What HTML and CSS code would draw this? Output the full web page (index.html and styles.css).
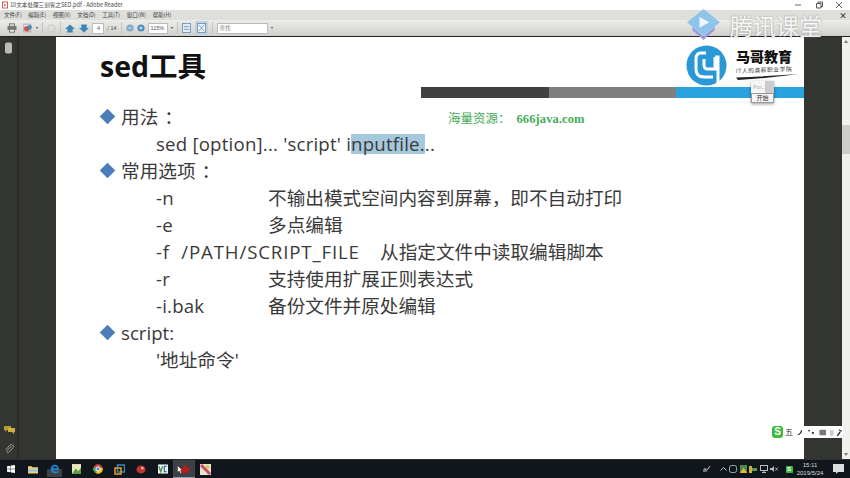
FILE: index.html

```html
<!DOCTYPE html>
<html lang="en">
<head>
  <meta charset="UTF-8">
  <title>10文本处理三剑客之SED.pdf - Adobe Reader</title>
  <link rel="stylesheet" href="styles.css">
</head>
<body>
  <div class="titlebar">
    <svg class="app-icon" width="6" height="8" viewBox="0 0 8 9"><rect x="0.5" y="0.5" width="7" height="8" fill="#fff" stroke="#b33"/><path d="M2 6.500C3 4 4 3 4 2C4 4 5 5 6.500 5.500C5 5 3 5.500 2 6.500Z" fill="#c22"/></svg>
    <span class="title-text">10文本处理三剑客之SED.pdf - Adobe Reader</span>
    <div class="win-btns">
      <svg width="8" height="8" viewBox="0 0 8 8"><path d="M1 4H7" stroke="#666"/></svg>
      <svg width="8" height="8" viewBox="0 0 8 8"><path d="M1.500 2.500H6V7H1.500ZM3 2.500V1H7.500V5.500H6" fill="none" stroke="#555"/></svg>
      <svg width="8" height="8" viewBox="0 0 8 8"><path d="M1 1L7 7M7 1L1 7" stroke="#666"/></svg>
    </div>
  </div>

  <div class="menubar">
    <span>文件(F)</span><span>编辑(E)</span><span>视图(V)</span><span>文档(D)</span><span>工具(T)</span><span>窗口(W)</span><span>帮助(H)</span>
    <span class="menu-close">×</span>
  </div>

  <div class="toolbar">
    <svg width="10" height="10" viewBox="0 0 12 11"><rect x="3" y="0.5" width="6" height="3" fill="#ddd" stroke="#666"/><rect x="0.5" y="3" width="11" height="5" rx="1" fill="#777"/><rect x="3" y="7" width="6" height="3.500" fill="#eee" stroke="#666"/></svg>
    <svg class="tb-m2" width="10" height="10" viewBox="0 0 13 12"><rect x="1" y="1" width="9" height="10" fill="#eee" stroke="#99a"/><circle cx="5" cy="7" r="3.600" fill="#d2533f"/><circle cx="8.500" cy="5" r="3" fill="#4d86bb"/></svg>
    <span class="caret"></span>
    <span class="tb-sep"></span>
    <svg width="9" height="9" viewBox="0 0 11 11"><circle cx="5.500" cy="5.500" r="4.500" fill="none" stroke="#ccc" stroke-width="1.400"/></svg>
    <span class="tb-sep"></span>
    <svg width="10" height="9" viewBox="0 0 11 10"><path d="M5.500 0.500L11 5.500H8.500V9.500H2.500V5.500H0Z" fill="#3c85b8"/></svg>
    <svg width="10" height="9" viewBox="0 0 11 10"><path d="M5.500 9.500L11 4.500H8.500V0.500H2.500V4.500H0Z" fill="#3c85b8"/></svg>
    <span class="tb-input page-num tb-m1">4</span>
    <span class="page-total tb-m1">/ 14</span>
    <span class="tb-sep"></span>
    <svg width="8" height="8" viewBox="0 0 10 10"><circle cx="5" cy="5" r="4.500" fill="#7fa9cb"/><path d="M3 5H7" stroke="#fff"/></svg>
    <svg class="tb-m1" width="8" height="8" viewBox="0 0 10 10"><circle cx="5" cy="5" r="4.500" fill="#4d8cc0"/><path d="M3 5H7M5 3V7" stroke="#fff"/></svg>
    <span class="tb-input zoom-val tb-m1">115%</span>
    <span class="caret"></span>
    <span class="tb-sep"></span>
    <svg width="9" height="10" viewBox="0 0 10 11"><rect x="0.500" y="0.500" width="9" height="10" fill="#e8eef4" stroke="#6f97bd"/><path d="M2 4H8M2 7H8" stroke="#6f97bd"/></svg>
    <span class="fit-active"><svg width="9" height="10" viewBox="0 0 11 12"><rect x="0.500" y="0.500" width="10" height="11" fill="#f2f6fa" stroke="#5f8fbb"/><path d="M2 2L9 10M9 2L2 10" stroke="#5f8fbb"/></svg></span>
    <span class="tb-sep"></span>
    <span class="tb-input search-box">查找</span>
    <span class="caret"></span>
  </div>

  <div class="viewer">
    <div class="side-panel">
      <svg width="9" height="12" viewBox="0 0 8 12"><rect x="0.500" y="0.500" width="7" height="11" rx="2" fill="#bbb"/></svg>
      <div class="side-bottom">
        <svg width="11" height="9" viewBox="0 0 11 9"><path d="M0 1H7V5H3L1 7V5H0Z" fill="#b89a35"/><path d="M4 3H11V7H10V9L8 7H4Z" fill="#d0b040"/></svg>
        <svg width="10" height="11" viewBox="0 0 10 11"><path d="M7.500 3L3.200 7.800C2 9.200 3.800 10.500 5 9.200L9 4.700C10.200 2.600 7.800 .3 6 2L1.600 7" fill="none" stroke="#999"/></svg>
      </div>
    </div>

    <div class="slide">
      <h1 class="slide-title">sed工具</h1>
      <div class="band"><span class="band-dark"></span><span class="band-grey"></span><span class="band-blue"></span></div>

      <div class="bullet bullet-first"><span class="diamond"></span>用法<span class="colon">：</span></div>
      <div class="indent latin">sed [option]... 'script' i<span class="selected">nputfile.</span>..</div>
      <div class="bullet"><span class="diamond"></span>常用选项<span class="colon">：</span></div>
      <div class="opt-row"><span class="opt latin">-n</span><span>不输出模式空间内容到屏幕，即不自动打印</span></div>
      <div class="opt-row"><span class="opt latin">-e</span><span>多点编辑</span></div>
      <div class="opt-row"><span class="opt opt-wide">-f &nbsp;/PATH/SCRIPT_FILE</span><span>从指定文件中读取编辑脚本</span></div>
      <div class="opt-row"><span class="opt latin">-r</span><span>支持使用扩展正则表达式</span></div>
      <div class="opt-row"><span class="opt latin">-i.bak</span><span>备份文件并原处编辑</span></div>
      <div class="bullet"><span class="diamond"></span>script:</div>
      <div class="indent">'地址命令'</div>

      <div class="promo">海量资源：<span class="promo-url">666java.com</span></div>

      <div class="brand">
        <svg width="41" height="41" viewBox="0 0 41 41"><circle cx="20.500" cy="20.500" r="20" fill="#2a97d6"/><path d="M20 8H15Q10 8 10 14V24Q10 32 18 32H27" fill="none" stroke="#fff" stroke-width="3"/><path d="M18 14V20Q18 24 22 24H29V12M29 12H32V38" fill="none" stroke="#fff" stroke-width="3"/></svg>
        <div class="brand-text">
          <div class="brand-name">马哥教育</div>
          <div class="brand-sub">IT人的高薪职业学院</div>
          <svg class="brand-line" width="62" height="6" viewBox="0 0 62 6"><path d="M0 3.500Q30 2.500 62 0Q35 4 2 6Z" fill="#222"/></svg>
        </div>
      </div>

      <div class="pop">
        <div class="pop-top">Poi...</div>
        <div class="pop-btn">开始</div>
      </div>

      <div class="ime">
        <span class="ime-s">S</span><span class="ime-wu">五</span>
        <svg width="47" height="9" viewBox="0 0 50 9"><path d="M3 7Q7 6 7 2Q7 6 3 7" fill="#333" stroke="#333"/><circle cx="15" cy="2.500" r="1" fill="#333"/><circle cx="19" cy="5" r="1.200" fill="#333"/><rect x="26" y="1.500" width="7" height="6" rx="1" fill="#777"/><rect x="37" y="2" width="4" height="6" fill="#ccc"/><path d="M45 8L48 4M47 1.500L49.500 3.500" stroke="#333" stroke-width="1.500"/></svg>
      </div>
    </div>

    <div class="right-panel"></div>
    <div class="scrollbar">
      <span class="arrow-up"></span>
      <span class="thumb"></span>
      <span class="arrow-down"></span>
    </div>
  </div>

  <div class="taskbar">
    <svg class="start" width="8" height="8" viewBox="0 0 10 10"><path d="M0 1.500L4.500 .8V4.700H0ZM5 .7L10 0V4.700H5ZM0 5.200H4.500V9.200L0 8.500ZM5 5.200H10V10L5 9.300Z" fill="#fff"/></svg>
    <span class="task"><svg width="10" height="9" viewBox="0 0 11 9"><path d="M0 1H4L5 2H11V9H0Z" fill="#f0d070"/><rect y="4" width="11" height="3" fill="#9cc7d8"/></svg></span>
    <span class="task task-edge"><svg width="10" height="10" viewBox="0 0 11 11"><path d="M1 6.500H9.800C10 3 8 .8 5.300 .8C2.800 .8 .8 3 .8 5.500C.8 8.500 3 10.200 5.500 10.200C7 10.200 8.500 9.800 9.500 9V7.300C7.500 8.700 3.700 9 3.200 6.500M3.200 4.700H7.700C7.500 2 3.500 2 3.200 4.700Z" fill="#1f86d0" fill-rule="evenodd"/></svg></span>
    <span class="task"><svg width="9" height="10" viewBox="0 0 10 11"><rect width="10" height="11" fill="#e9e6c0"/><path d="M0 11L4 5L7 8L10 4V11Z" fill="#5a9b3e"/></svg></span>
    <span class="task"><svg width="10" height="10" viewBox="0 0 11 11"><circle cx="5.500" cy="5.500" r="5.200" fill="#d9483b"/><path d="M5.500 5.500L10.500 4A5.200 5.200 0 0 1 3 10Z" fill="#f4c20d"/><path d="M5.500 5.500L3 10A5.200 5.200 0 0 1 .8 3.200Z" fill="#3aa757"/><circle cx="5.500" cy="5.500" r="2.300" fill="#4a8cf0" stroke="#fff"/></svg></span>
    <span class="task"><svg width="11" height="11" viewBox="0 0 11 11"><rect x="3.500" y="1" width="7" height="7" fill="none" stroke="#2f90c8" stroke-width="1.400"/><rect x="1" y="4" width="6" height="6" fill="none" stroke="#e29420" stroke-width="1.600"/></svg></span>
    <span class="task"><svg width="10" height="9" viewBox="0 0 11 9"><ellipse cx="5.500" cy="4.500" rx="5" ry="4.300" fill="#c2352d"/><circle cx="7" cy="3" r="1.400" fill="#e9b6a8"/></svg></span>
    <span class="task"><svg width="10" height="10" viewBox="0 0 11 10"><rect width="11" height="10" fill="#edf4ea"/><path d="M1 2L3 8L5 2" fill="none" stroke="#3c8f4a" stroke-width="1.400"/><path d="M9.500 2H7V8H9.500" fill="none" stroke="#2f6fb5" stroke-width="1.400"/></svg></span>
    <span class="task current"><svg width="12" height="9" viewBox="0 0 12 9"><path d="M0 5Q2 2 5 3L7 0L9 1L8 3H12Q11 8 6 8Q2 9 0 5Z" fill="#c4161c"/></svg></span>
    <span class="task"><svg width="11" height="11" viewBox="0 0 11 11"><rect width="11" height="11" fill="#dfe6d2"/><path d="M1 1L10 10" stroke="#d04a6a" stroke-width="3"/><circle cx="7.500" cy="3" r="2" fill="#e4c74a"/></svg></span>

    <div class="tray">
      <svg width="8" height="8" viewBox="0 0 8 8"><path d="M1 7V4H3V7M4 5L7 1" fill="none" stroke="#ccc"/></svg>
      <svg class="tray-caret" width="7" height="4" viewBox="0 0 7 4"><path d="M.5 3.500L3.500 .5L6.500 3.500" fill="none" stroke="#ccc"/></svg>
      <svg width="8" height="8" viewBox="0 0 8 8"><rect x=".5" y=".5" width="7" height="7" rx="2" fill="none" stroke="#9ab"/></svg>
      <svg width="7" height="8" viewBox="0 0 7 8"><rect width="7" height="8" fill="#4a8a50"/><path d="M3.500 3L7 8H0Z" fill="#e6bf2c"/></svg>
      <svg width="8" height="7" viewBox="0 0 8 7"><rect width="3" height="7" fill="#c9b04a"/><rect x="3" y="2" width="5" height="3" fill="#5f9a5a"/></svg>
      <svg width="8" height="8" viewBox="0 0 8 8"><rect x=".5" y=".5" width="7" height="5" fill="none" stroke="#bbb"/><path d="M4 6V8M2 7.500H6" stroke="#bbb"/></svg>
      <svg width="8" height="8" viewBox="0 0 8 8"><path d="M0 3H2L4 1V7L2 5H0Z" fill="#bbb"/><path d="M5.500 2.500L7.500 5.500M7.500 2.500L5.500 5.500" stroke="#bbb" stroke-width=".8"/></svg>
      <span class="tray-s">S</span>
      <div class="clock"><div>15:11</div><div>2019/5/24</div></div>
      <svg class="notify" width="11" height="11" viewBox="0 0 11 11"><path d="M0 0H11V8H5L3 10V8H0Z" fill="#ddd"/></svg>
    </div>
  </div>

  <svg class="cursor" width="6" height="9" viewBox="0 0 6 9"><path d="M.5 .5V7.500L2.200 6L3.500 8.500L4.700 8L3.500 5.500H5.500Z" fill="#fff" stroke="#222" stroke-width=".5"/></svg>

  <div class="watermark">
    <svg width="39" height="32" viewBox="0 0 39 36"><path d="M7 20L19.500 31L32 20V24L19.500 35L7 24Z" fill="#9a9ae0"/><path d="M19.500 0L38 15L19.500 30L1 15Z" fill="#8fc4ea"/><path d="M15 9L26 15L15 21Z" fill="#eef6fc"/></svg>
    <span class="wm-text">腾讯课堂</span>
  </div>
</body>
</html>
```

FILE: styles.css

```css
* {
  box-sizing: border-box;
}
html, body {
  margin: 0;
  padding: 0;
}
body {
  width: 850px;
  height: 478px;
  overflow: hidden;
  position: relative;
  display: flex;
  flex-direction: column;
  font-family: "Noto Sans CJK SC", "Liberation Sans", sans-serif;
  background-color: #2e2e2c;
}
.titlebar {
  height: 10px;
  flex: none;
  background-color: #fff;
  display: flex;
  align-items: center;
  padding-left: 2px;
  font-size: 5.600px;
  color: #444;
}
.app-icon {
  margin-right: 2px;
}
.win-btns {
  margin-left: auto;
  display: flex;
  gap: 12.500px;
  padding-right: 7px;
}
.menubar {
  height: 10px;
  flex: none;
  background-color: #dededb;
  display: flex;
  align-items: center;
  gap: 6.500px;
  padding-left: 4px;
  font-size: 5.500px;
  color: #444;
}
.menu-close {
  margin-left: auto;
  padding-right: 3px;
  font-size: 8px;
  font-weight: bold;
  color: #333;
}
.toolbar {
  height: 17px;
  flex: none;
  background: linear-gradient(#ecece9, #cfcfcc);
  border-bottom: 1px solid #222;
  display: flex;
  align-items: center;
  padding-left: 7px;
  gap: 4px;
  font-size: 5.500px;
  color: #555;
}
.tb-m1 {
  margin-left: -1px;
}
.tb-m2 {
  margin-left: 2px;
}
.tb-sep {
  width: 1px;
  height: 12px;
  background-color: #c4c4c0;
}
.caret {
  width: 0;
  height: 0;
  margin-left: -1px;
  border-left: 1.500px solid transparent;
  border-right: 1.500px solid transparent;
  border-top: 2px solid #444;
}
.tb-input {
  height: 11px;
  background-color: #fff;
  border: 1px solid #bbb;
  display: flex;
  align-items: center;
  padding-left: 2px;
  font-family: "Liberation Sans", "Noto Sans CJK SC", sans-serif;
}
.page-num {
  width: 12px;
  padding-left: 4px;
}
.zoom-val {
  width: 20px;
}
.fit-active {
  width: 13px;
  height: 14px;
  background-color: #c4d0da;
  display: flex;
  align-items: center;
  justify-content: center;
}
.search-box {
  width: 51px;
  color: #888;
}
.viewer {
  flex: 1;
  display: flex;
  min-height: 0;
}
.side-panel {
  width: 56px;
  flex: none;
  background: linear-gradient(90deg, #333531 0, #333531 17px, #1f1f1e 18px, #333531 19px);
  display: flex;
  flex-direction: column;
  align-items: flex-start;
  padding: 5px 0 5px 4px;
}
.side-bottom {
  margin-top: auto;
  display: flex;
  flex-direction: column;
  gap: 9px;
}
.slide {
  width: 748px;
  flex: none;
  position: relative;
  background-color: #fff;
  color: #3a3a3a;
  font-family: "Open Sans", "Noto Sans CJK SC", sans-serif;
  font-size: 18.650px;
  padding-left: 44px;
}
.slide-title {
  margin: 0;
  padding-top: 9px;
  height: 51px;
  font-family: "Open Sans", "Noto Sans CJK SC", sans-serif;
  font-size: 28.500px;
  line-height: 40px;
  font-weight: 700;
  color: #111;
}
.band {
  position: absolute;
  left: 365px;
  right: 0;
  top: 50px;
  height: 11px;
  display: flex;
}
.band span {
  flex: 1;
}
.band-dark {
  background-color: #404040;
}
.band-grey {
  background-color: #7f7f7f;
}
.band-blue {
  background-color: #29a2e0;
}
.bullet, .indent, .opt-row {
  height: 27.100px;
  line-height: 27.100px;
  white-space: nowrap;
}
.bullet {
  display: flex;
  align-items: center;
}
.bullet-first {
  margin-top: 14.500px;
}
.diamond {
  width: 11px;
  height: 11px;
  margin: 0 8px 0 2px;
  transform: rotate(45deg);
  background-color: #4a7ebb;
  flex: none;
}
.colon {
  margin-left: 6px;
}
.latin {
  letter-spacing: .2px;
}
.indent {
  padding-left: 56px;
}
.selected {
  display: inline-block;
  height: 20px;
  line-height: 20px;
  background-color: #a6c8dd;
}
.opt-row {
  display: flex;
  padding-left: 56px;
}
.opt {
  width: 112px;
  flex: none;
}
.opt-wide {
  width: 224px;
  letter-spacing: .85px;
}
.promo {
  position: absolute;
  left: 392px;
  top: 71px;
  font-family: "Noto Sans CJK SC", sans-serif;
  font-size: 12.500px;
  color: #45ac58;
}
.promo-url {
  margin-left: 6px;
  font-family: "Liberation Serif", serif;
  font-weight: 700;
  letter-spacing: .1px;
}
.brand {
  position: absolute;
  left: 630px;
  top: 8px;
  display: flex;
  gap: 9px;
}
.brand-text {
  padding-top: 2px;
}
.brand-name {
  font-family: "Noto Sans CJK SC", sans-serif;
  font-size: 14px;
  line-height: 18px;
  font-weight: 900;
  color: #111;
}
.brand-sub {
  font-size: 5.800px;
  line-height: 8px;
  margin-top: 1px;
  color: #333;
  letter-spacing: .5px;
  white-space: nowrap;
  transform: rotate(-2deg);
}
.brand-line {
  display: block;
}
.pop {
  position: absolute;
  left: 695px;
  top: 44px;
  width: 23px;
  font-size: 6px;
  line-height: 12px;
  box-shadow: 0 1px 3px rgba(0, 0, 0, .4);
  color: #555;
  background-color: #f4f4f4;
}
.pop-top {
  height: 12px;
  line-height: 12px;
  padding-left: 2px;
  color: #aaa;
  background: linear-gradient(90deg, #f6f6f6 60%, #ccc 60%);
}
.pop-btn {
  text-align: center;
  border: 1px solid #999;
  height: 10px;
  line-height: 8px;
  color: #333;
}
.ime {
  position: absolute;
  left: 716px;
  bottom: 21px;
  width: 71px;
  display: flex;
  align-items: center;
  gap: 2px;
  background-color: #fff;
  font-size: 8px;
  line-height: 10px;
  color: #333;
}
.ime-s {
  width: 11px;
  height: 12px;
  border-radius: 3px;
  background-color: #3dbb3d;
  color: #fff;
  font-family: "Liberation Sans", sans-serif;
  font-weight: 700;
  font-size: 10px;
  line-height: 12px;
  text-align: center;
}
.right-panel {
  width: 38px;
  flex: none;
  background-color: #333531;
}
.scrollbar {
  width: 8px;
  flex: none;
  display: flex;
  flex-direction: column;
  align-items: center;
  background-color: #f0f0ee;
  padding: 3px 0;
}
.thumb {
  width: 8px;
  height: 29px;
  margin-top: 82px;
  background-color: #cdcdcb;
}
.arrow-up, .arrow-down {
  width: 0;
  height: 0;
  border-left: 2.500px solid transparent;
  border-right: 2.500px solid transparent;
}
.arrow-up {
  border-bottom: 3px solid #777;
}
.arrow-down {
  margin-top: auto;
  border-top: 3px solid #777;
}
.taskbar {
  height: 19px;
  flex: none;
  background-color: #10161c;
  border-top: 1px solid #2c3034;
  display: flex;
  align-items: center;
  padding-left: 7px;
}
.start {
  margin-right: 7.200px;
}
.task {
  width: 21.600px;
  height: 18px;
  display: flex;
  align-items: center;
  justify-content: center;
  box-shadow: inset 3px -1px 0 #10161c, inset -3px -1px 0 #10161c, inset 0 -1px 0 #8da2b4;
}
.task-edge {
  background: linear-gradient(#10161c 50%, #3c4144 50%);
}
.current {
  background-color: #3c4144;
  box-shadow: inset 0 -1px 0 #8da2b4;
}
.tray {
  margin-left: auto;
  display: flex;
  align-items: center;
  gap: 2.500px;
  padding-right: 6.500px;
  color: #ddd;
  font-size: 6px;
}
.tray-caret {
  margin-left: 6.500px;
}
.tray-s {
  width: 7px;
  height: 7px;
  margin-left: 5px;
  border-radius: 1px;
  background-color: #3dbb3d;
  color: #fff;
  font-size: 6px;
  line-height: 7px;
  text-align: center;
  font-family: "Liberation Sans", sans-serif;
  font-weight: 700;
}
.clock {
  width: 30px;
  text-align: center;
  line-height: 8px;
  white-space: nowrap;
  font-family: "Liberation Sans", sans-serif;
}
.notify {
  margin-left: 5px;
}
.cursor {
  position: absolute;
  left: 177px;
  top: 465px;
}
.watermark {
  position: absolute;
  left: 684px;
  top: 9px;
  display: flex;
  align-items: center;
  gap: 7px;
}
.wm-text {
  font-size: 23px;
  line-height: 30px;
  color: rgba(255, 255, 255, .92);
  text-shadow: 0 0 2px rgba(110, 110, 110, .7);
}
```
